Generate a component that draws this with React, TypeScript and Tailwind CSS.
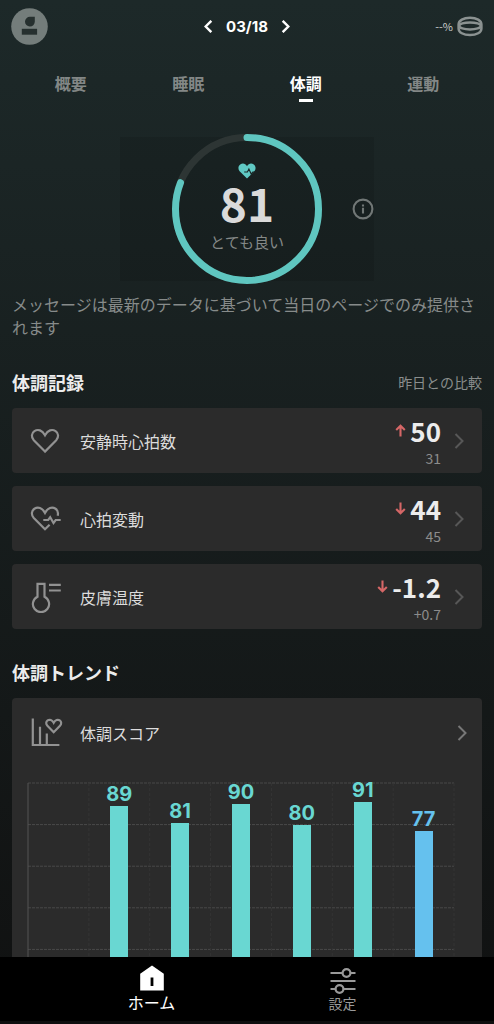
import React, { useState } from 'react';

type Direction = 'up' | 'down';

interface HealthRecord {
  id: string;
  label: string;
  value: string;
  previous: string;
  direction: Direction;
  icon: React.ReactNode;
}

const TABS = ['概要', '睡眠', '体調', '運動'];

const SCORE = 81;

// null = no data for that day
const TREND: (number | null)[] = [null, 89, 81, 90, 80, 91, 77];

const AvatarIcon = () => (
  <svg className="h-[37px] w-[37px]" viewBox="0 0 37 37" aria-hidden="true">
    <circle cx="18.5" cy="18.5" r="18.3" fill="#747d7b" />
    <path d="M19 8.8h4.8v5a4.9 4.9 0 1 1-4.8-5z" fill="#26302f" />
    <path d="M10.8 20.8h15.3v5.9H10.8z" fill="#26302f" />
  </svg>
);

const RingIcon = () => (
  <svg className="h-[21px] w-[26px]" viewBox="0 0 26 21" fill="none" stroke="#8b9291" strokeWidth="2.5" aria-hidden="true">
    <path d="M1.6 8.4C1.6 4.4 6.4 1.7 13 1.7s11.4 2.7 11.4 6.700v4c0 4-4.800 6.700-11.400 6.700S1.600 16.400 1.600 12.400z" />
    <ellipse cx="13" cy="9.900" rx="10.800" ry="3.500" />
  </svg>
);

const Chevron = ({ className, back }: { className: string; back?: boolean }) => (
  <svg className={className} viewBox="0 0 10 16" fill="none" stroke="currentColor" aria-hidden="true">
    <path d={back ? 'M8.5 1L1.5 8l7 7' : 'M1.5 1l7 7-7 7'} />
  </svg>
);

const HeartIcon = () => (
  <svg className="h-8 w-8" viewBox="0 0 32 32" fill="none" stroke="#929292" strokeWidth="2.2" aria-hidden="true">
    <path d="M15 26.6L3.8 15.2C1 12.2 1.4 8 4.4 6.1c3.6-2.3 7.8-1 10.6 4.1 2.8-5.1 7-6.4 10.6-4.1 3 1.900 3.400 6.100.6 9.100z" />
  </svg>
);

const HeartPulseIcon = () => (
  <svg className="h-8 w-8" viewBox="0 0 32 32" fill="none" stroke="#929292" strokeWidth="2.2" aria-hidden="true">
    <path d="M19.6 21.8L15 26.3 3.8 14.9C1 11.9 1.4 7.7 4.4 5.8c3.6-2.3 7.8-1 10.6 4.1 2.8-5.1 7-6.4 10.6-4.1 2 1.3 2.8 3.900 2.100 6.900" />
    <path d="M13.300 17h4.900l2-2.800 3.300 5.800 2.200-3h5" />
  </svg>
);

const ThermometerIcon = () => (
  <svg className="h-8 w-8" viewBox="0 0 32 32" fill="none" stroke="#929292" strokeWidth="2.2" aria-hidden="true">
    <path d="M7.5 15.7V2.8h7v12.9a8.100 8.100 0 1 1-7 0z" />
    <path d="M19 3.800h11.800M19 9.500h11.800" />
  </svg>
);

const ScoreChartIcon = () => (
  <svg className="h-8 w-8 overflow-visible" viewBox="0 0 32 32" fill="none" stroke="#929292" strokeWidth="2.2" aria-hidden="true">
    <path d="M2.8 1.6V28h26.600M10 28V9.700M16.800 28V16.600" />
    <path d="M23.7 15.2l-6.300-6.400c-1.700-1.800-1.500-4.300.2-5.400 2.100-1.300 4.500-.5 6.100 2.400 1.600-2.900 4-3.700 6.100-2.400 1.700 1.100 1.900 3.600.2 5.400z" />
  </svg>
);

const HomeIcon = () => (
  <svg className="h-[26px] w-[26px]" viewBox="0 0 26 26" fill="#fff" aria-hidden="true">
    <path fillRule="evenodd" d="M13 .5L24.8 8.7V25.500H1.200V8.700zM11.600 12.500v8.500h2.800v-8.500z" />
  </svg>
);

const SettingsIcon = () => (
  <svg className="h-[26px] w-[26px]" viewBox="0 0 26 26" fill="none" stroke="#9a9a9a" strokeWidth="2.2" aria-hidden="true">
    <path d="M.5 5h12M20.5 5h5M.5 13h25M.5 21h5M13.5 21h12" />
    <circle cx="16.5" cy="5" r="3.9" />
    <circle cx="9.5" cy="21" r="3.9" />
  </svg>
);

const TrendArrow = ({ direction }: { direction: Direction }) => (
  <svg className="h-[13px] w-[11px]" viewBox="0 0 11 13" fill="none" stroke="#d66767" strokeWidth="2.1" aria-hidden="true">
    <path d={direction === 'up' ? 'M5.5 12.5V2M1.2 6l4.3-4.3L9.8 6' : 'M5.5 .5V11M1.2 7l4.3 4.3L9.8 7'} />
  </svg>
);

const RECORDS: HealthRecord[] = [
  { id: 'rhr', label: '安静時心拍数', value: '50', previous: '31', direction: 'up', icon: <HeartIcon /> },
  { id: 'hrv', label: '心拍変動', value: '44', previous: '45', direction: 'down', icon: <HeartPulseIcon /> },
  { id: 'temp', label: '皮膚温度', value: '-1.2', previous: '+0.7', direction: 'down', icon: <ThermometerIcon /> },
];

const ScoreRing = ({ score }: { score: number }) => (
  <div className="relative h-[150px] w-[150px]">
    <svg className="absolute inset-0 h-full w-full -rotate-90" viewBox="0 0 150 150" fill="none" strokeWidth="7" aria-hidden="true">
      <circle cx="75" cy="75" r="71.5" stroke="#2d3534" />
      <circle cx="75" cy="75" r="71.5" stroke="#5fc6c0" strokeLinecap="round" pathLength="100" strokeDasharray={`${score} 100`} />
    </svg>
    <div className="relative flex flex-col items-center pt-[29px]">
      <svg className="h-4 w-[18px]" viewBox="0 0 18 16" fill="none" aria-hidden="true">
        <path d="M9 15.6L1.6 8.2C-.2 6.2.1 3 2.2 1.5 4.6-.1 7.4.4 9 3.2c1.6-2.8 4.4-3.3 6.8-1.7 2.1 1.5 2.4 4.7.6 6.7z" fill="#60c9c4" />
        <path d="M6.2 9h3.2l1.5-2.9 2.3 5L14.8 9H18" stroke="#1a2424" strokeWidth="1.1" />
      </svg>
      <span className="text-[46px] font-bold leading-[46px] text-[#dadada]">{score}</span>
      <span className="mt-1.5 text-[15px] leading-[22px] text-[#858988]">とても良い</span>
    </div>
  </div>
);

const RecordRow = ({ record }: { record: HealthRecord }) => (
  <li>
    <button className="flex h-[65px] w-full items-center rounded-sm bg-[#2b2b2b] pl-[18px] pr-[18px] text-left">
      {record.icon}
      <span className="ml-[18px] flex-1 text-base text-[#dcdcdc]">{record.label}</span>
      <span className="flex flex-col items-end">
        <span className="flex items-center gap-1">
          <TrendArrow direction={record.direction} />
          <span className="text-[26px] font-bold leading-[34px] text-[#ececec]">{record.value}</span>
        </span>
        <span className="text-sm leading-5 text-[#8c8c8c]">{record.previous}</span>
      </span>
      <Chevron className="ml-[13px] h-4 w-[10px] stroke-2 text-[#575757]" />
    </button>
  </li>
);

const TrendChart = () => (
  <div className="relative ml-4 mr-7 mt-[15px] h-[208px]">
    <svg className="absolute inset-0 h-full w-full overflow-visible" aria-hidden="true">
      {[0, 1, 2, 3, 4, 5].map((i) => (
        <line key={`h${i}`} x1="0" x2="100%" y1={`${i * 20}%`} y2={`${i * 20}%`} stroke="#494949" strokeDasharray="3 1" />
      ))}
      {[1, 2, 3, 4, 5, 6, 7].map((i) => (
        <line key={`v${i}`} x1={`${(i / 7) * 100}%`} x2={`${(i / 7) * 100}%`} y1="0" y2="100%" stroke="#343434" strokeDasharray="3 2" />
      ))}
      <line x1="0" x2="0" y1="0" y2="100%" stroke="#555555" />
    </svg>
    <div className="relative grid h-full grid-cols-7 font-['Inter','Noto_Sans_CJK_JP',sans-serif]">
      {TREND.map((score, i) => {
        const isToday = i === TREND.length - 1;
        return (
          <div key={i} className="flex h-full flex-col items-center justify-end">
            {score !== null && (
              <>
                <span className={`shrink-0 text-xl font-bold leading-6 ${isToday ? 'text-[#65c1ee]' : 'text-[#69d7d2]'}`}>{score}</span>
                <span
                  className={`w-[18px] shrink-0 ${isToday ? 'bg-[#65c1ee]' : 'bg-[#69d7d2]'}`}
                  style={{ height: `${score}%` }}
                />
              </>
            )}
          </div>
        );
      })}
    </div>
  </div>
);

export default function App() {
  const [activeTab, setActiveTab] = useState('体調');

  return (
    <div className="flex h-screen flex-col bg-linear-to-b from-[#1d2929] to-[#101111] font-['Noto_Sans_CJK_JP',sans-serif] text-white">
      <main className="flex-1 overflow-y-auto px-3 pb-6 [scrollbar-width:none]">
        <header className="-mx-px grid h-[53px] grid-cols-[1fr_auto_1fr] items-center">
          <button aria-label="プロフィール" className="justify-self-start">
            <AvatarIcon />
          </button>
          <div className="flex items-center gap-[13px]">
            <button aria-label="前の日">
              <Chevron back className="h-[13px] w-[9px] stroke-3" />
            </button>
            <span className="font-['Inter','Noto_Sans_CJK_JP',sans-serif] text-[15px] font-bold leading-6">03/18</span>
            <button aria-label="次の日">
              <Chevron className="h-[13px] w-[9px] stroke-3" />
            </button>
          </div>
          <button aria-label="リングのバッテリー" className="flex items-center gap-1 justify-self-end text-[11px] text-[#c9cccb]">
            --%
            <RingIcon />
          </button>
        </header>

        <div role="tablist" className="grid grid-cols-4 pt-4">
          {TABS.map((tab) => (
            <button
              key={tab}
              role="tab"
              aria-selected={tab === activeTab}
              onClick={() => setActiveTab(tab)}
              className={`flex flex-col items-center gap-0.5 text-base font-bold leading-7 ${tab === activeTab ? 'text-white' : 'text-[#838786]'}`}
            >
              {tab}
              <span className={`h-[3px] w-[14px] ${tab === activeTab ? 'bg-white' : ''}`} />
            </button>
          ))}
        </div>

        <section className="mx-auto mt-[35px] grid h-36 w-[254px] grid-cols-[1fr_auto_1fr] items-center bg-black/10">
          <div className="col-start-2 -my-[3px]">
            <ScoreRing score={SCORE} />
          </div>
          <button aria-label="スコアについて" className="justify-self-end">
            <svg className="h-[22px] w-[22px]" viewBox="0 0 22 22" fill="none" stroke="#717776" strokeWidth="2.1" aria-hidden="true">
              <circle cx="11" cy="11" r="9.4" />
              <path d="M11 9.8v5.6M11 6.4v2" />
            </svg>
          </button>
        </section>

        <p className="mt-3 text-base leading-[23px] text-[#878b8a]">
          メッセージは最新のデータに基づいて当日のページでのみ提供されます
        </p>

        <section>
          <div className="mt-[29px] flex items-center justify-between leading-7">
            <h2 className="text-lg font-bold leading-7 text-[#ececec]">体調記録</h2>
            <span className="text-sm leading-7 text-[#8a8e8d]">昨日との比較</span>
          </div>
          <ul className="mt-3 flex flex-col gap-[13px]">
            {RECORDS.map((record) => (
              <RecordRow key={record.id} record={record} />
            ))}
          </ul>
        </section>

        <section>
          <h2 className="mt-[29px] text-lg font-bold leading-7 text-[#ececec]">体調トレンド</h2>
          <div className="mt-3 rounded-sm bg-[#2b2b2b] pb-10">
            <button className="flex h-[70px] w-full items-center pl-[18px] pr-[15px] text-left">
              <ScoreChartIcon />
              <span className="ml-[18px] flex-1 text-base text-[#dcdcdc]">体調スコア</span>
              <Chevron className="h-4 w-[10px] stroke-2 text-[#777777]" />
            </button>
            <TrendChart />
          </div>
        </section>
      </main>

      <nav className="flex h-[67px] shrink-0 justify-center border-b-[3px] border-[#0e0e0e] bg-black">
        <button className="flex w-[191px] flex-col items-center pt-2 text-base leading-[22px] text-white" aria-current="page">
          <HomeIcon />
          ホーム
        </button>
        <button className="flex w-[191px] flex-col items-center pt-[11px] text-sm leading-[18px] text-[#9a9a9a]">
          <SettingsIcon />
          設定
        </button>
      </nav>
    </div>
  );
}
